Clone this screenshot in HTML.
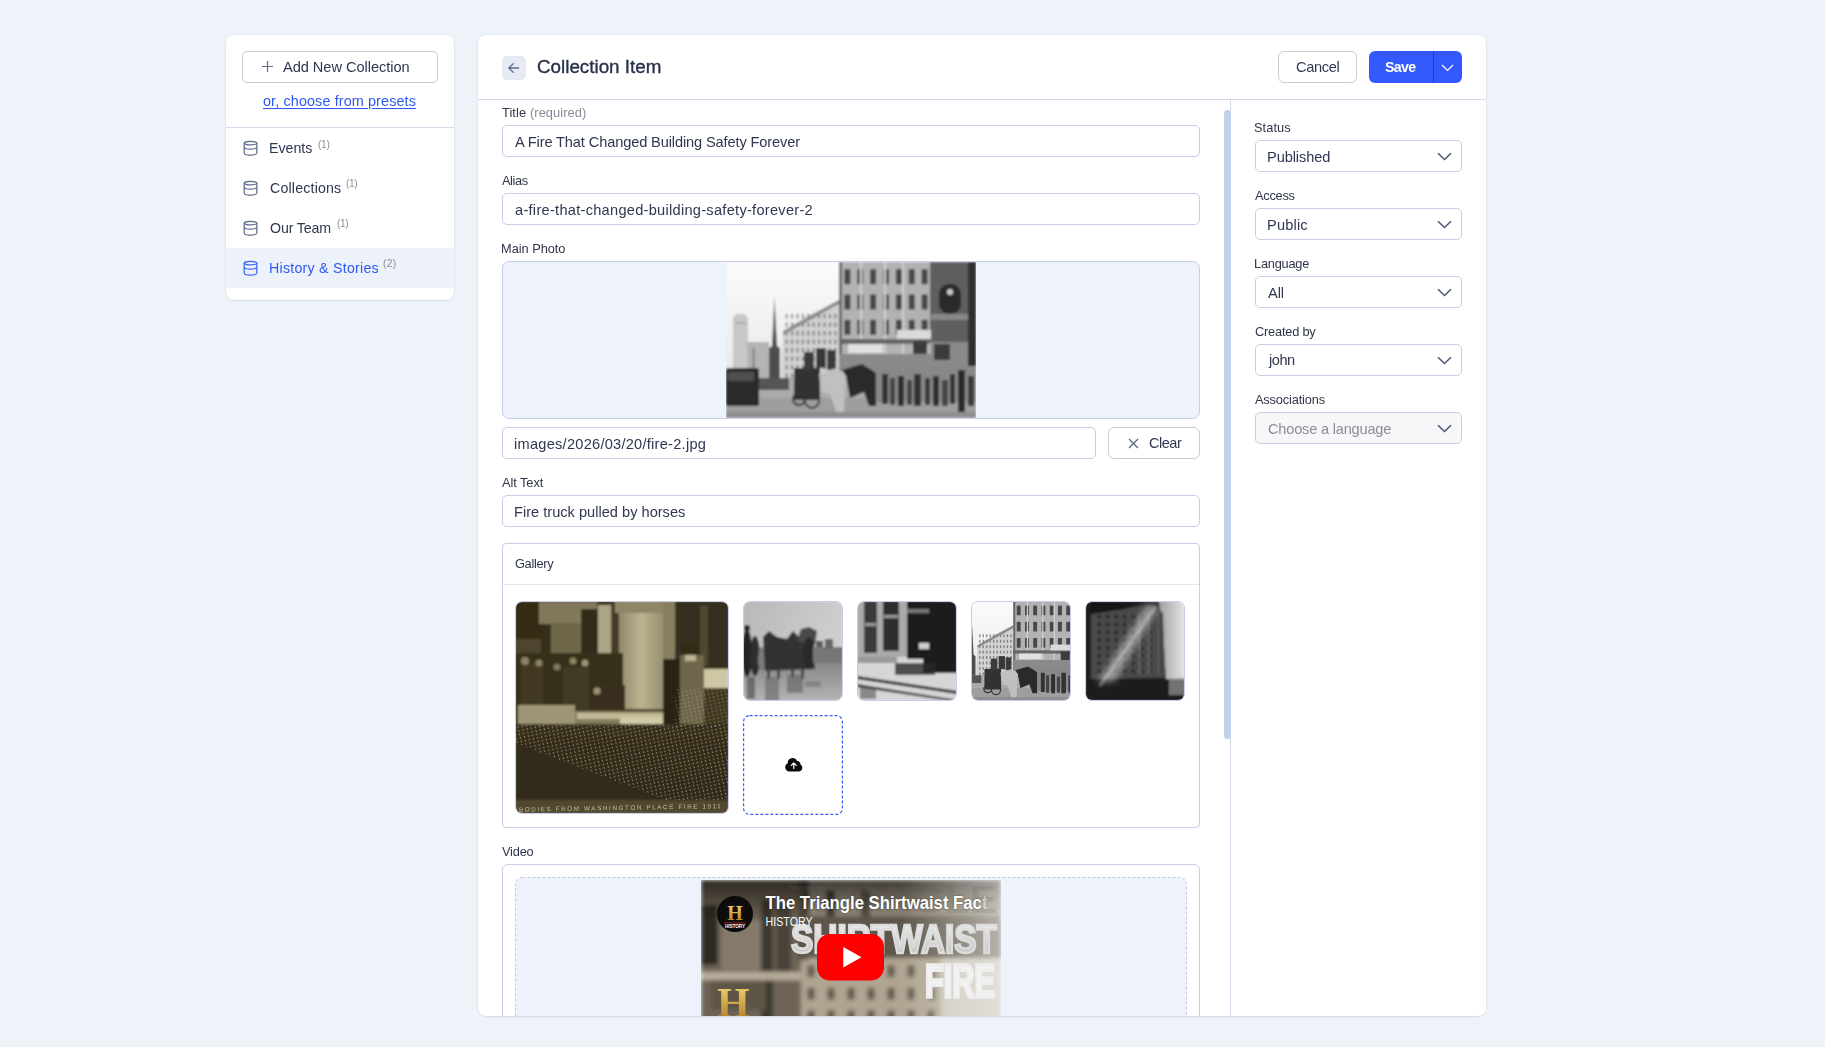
<!DOCTYPE html>
<html><head><meta charset="utf-8">
<style>
*{box-sizing:border-box;margin:0;padding:0}
html,body{width:1825px;height:1047px;overflow:hidden;background:#eef2f9;font-family:"Liberation Sans",sans-serif}
.abs{position:absolute}
.card{position:absolute;background:#fff;border-radius:8px;box-shadow:0 0 0 0.5px rgba(60,70,100,.09),0 1px 2px rgba(40,50,80,.08)}
.box{position:absolute;border:1px solid #c7cde6;border-radius:5px;background:#fff}
.thumb{position:absolute;border:1px solid #c7cde6;border-radius:7px;overflow:hidden}
.thumb svg{display:block;margin:-1px}
.abs>svg{display:block}
.tx{position:absolute;line-height:1;white-space:nowrap;will-change:transform}
</style></head><body>

<div class="card" style="left:226px;top:35px;width:228px;height:265px"></div>
<div class="abs" style="left:242px;top:51px;width:196px;height:32px;border:1px solid #c9cbd3;border-radius:5px"></div>
<svg class="abs" style="left:262px;top:61.2px" width="11" height="11" viewBox="0 0 11 11"><path d="M5.5 0v11M0 5.5h11" stroke="#5f6b8a" stroke-width="1.15" fill="none"/></svg>
<div class="abs" style="left:226px;top:127px;width:228px;height:1px;background:#d6dcec"></div>
<div class="abs" style="left:226px;top:248px;width:228px;height:40px;background:#edf1f9"></div>
<div class="abs" style="left:242.5px;top:140.2px"><svg width="15" height="16" viewBox="0 0 15 16"><g fill="none" stroke="#5d6a8e" stroke-width="1.2"><ellipse cx="7.5" cy="3.1" rx="6.3" ry="1.8"/><path d="M1.2 3.1v9.9c0 1.2 2.8 2.1 6.3 2.1s6.3-.9 6.3-2.1V3.1"/><path d="M1.2 7c0 1.2 2.8 2.1 6.3 2.1s6.3-.9 6.3-2.1"/></g></svg></div>
<div class="abs" style="left:242.5px;top:180.2px"><svg width="15" height="16" viewBox="0 0 15 16"><g fill="none" stroke="#5d6a8e" stroke-width="1.2"><ellipse cx="7.5" cy="3.1" rx="6.3" ry="1.8"/><path d="M1.2 3.1v9.9c0 1.2 2.8 2.1 6.3 2.1s6.3-.9 6.3-2.1V3.1"/><path d="M1.2 7c0 1.2 2.8 2.1 6.3 2.1s6.3-.9 6.3-2.1"/></g></svg></div>
<div class="abs" style="left:242.5px;top:220.2px"><svg width="15" height="16" viewBox="0 0 15 16"><g fill="none" stroke="#5d6a8e" stroke-width="1.2"><ellipse cx="7.5" cy="3.1" rx="6.3" ry="1.8"/><path d="M1.2 3.1v9.9c0 1.2 2.8 2.1 6.3 2.1s6.3-.9 6.3-2.1V3.1"/><path d="M1.2 7c0 1.2 2.8 2.1 6.3 2.1s6.3-.9 6.3-2.1"/></g></svg></div>
<div class="abs" style="left:242.5px;top:260.2px"><svg width="15" height="16" viewBox="0 0 15 16"><g fill="none" stroke="#3a63ee" stroke-width="1.2"><ellipse cx="7.5" cy="3.1" rx="6.3" ry="1.8"/><path d="M1.2 3.1v9.9c0 1.2 2.8 2.1 6.3 2.1s6.3-.9 6.3-2.1V3.1"/><path d="M1.2 7c0 1.2 2.8 2.1 6.3 2.1s6.3-.9 6.3-2.1"/></g></svg></div>

<div class="card" style="left:478px;top:35px;width:1008px;height:981px"></div>
<div class="abs" style="left:502px;top:56px;width:24px;height:24px;border-radius:5px;background:#e6eaf4"></div>
<svg class="abs" style="left:502px;top:56px" width="24" height="24" viewBox="0 0 24 24"><path d="M16.6 12H6.8M11.3 7.6L6.8 12l4.5 4.4" stroke="#5d6b90" stroke-width="1.3" fill="none" stroke-linecap="round" stroke-linejoin="round"/></svg>
<div class="abs" style="left:1278px;top:51px;width:79px;height:32px;border:1px solid #c9cbd3;border-radius:6px"></div>
<div class="abs" style="left:1369px;top:51px;width:93px;height:32px;border-radius:6px;background:#3358fc"></div>
<div class="abs" style="left:1433px;top:51px;width:1.3px;height:32px;background:#2240b5"></div>
<svg class="abs" style="left:1440.7px;top:64px" width="13" height="8" viewBox="0 0 13 8"><path d="M1 1l5.5 5.5L12 1" stroke="#fff" stroke-width="1.2" fill="none"/></svg>
<div class="abs" style="left:478px;top:99px;width:1008px;height:1px;background:#d3d9ea"></div>
<div class="abs" style="left:1230px;top:100px;width:1px;height:916px;background:#d5daec"></div>
<div class="abs" style="left:1224px;top:110px;width:7px;height:629px;border-radius:3.5px;background:#c2d0e8"></div>

<div class="box" style="left:502px;top:125px;width:698px;height:32px"></div>
<div class="box" style="left:502px;top:193px;width:698px;height:32px"></div>
<div class="box" style="left:502px;top:261px;width:698px;height:158px;background:#eef2fa;border-radius:7px;overflow:hidden">
  <div class="abs" style="left:223px;top:0px;width:250px;height:156px"><svg width="250" height="156" viewBox="0 0 250 156" style="display:block">
<defs><filter id="bl1" x="-5%" y="-5%" width="110%" height="110%"><feGaussianBlur stdDeviation="0.8"/></filter>
<linearGradient id="sky1" x1="0" y1="0" x2="0" y2="1"><stop offset="0" stop-color="#fbfbfb"/><stop offset="1" stop-color="#e2e2e2"/></linearGradient></defs>
<g filter="url(#bl1)"><rect width="250" height="156" fill="url(#sky1)"/>
<path d="M7 110 L7 56 L10 52 L19 52 L22 56 L22 110 Z" fill="#c8c8c8"/>
<rect x="9" y="60" width="11" height="2" fill="#aaa"/>
<rect x="21" y="80" width="22" height="38" fill="#b4b4b4"/>
<rect x="26" y="86" width="3" height="30" fill="#777" opacity=".6"/>
<path d="M55 120 L57 69 L85 52 L113 38 L113 122 Z" fill="#d2d2d2"/>
<rect x="59.7" y="52.0" width="2" height="4.5" fill="#5a5a5a" opacity="0.7"/><rect x="59.7" y="60.5" width="2" height="4.5" fill="#5a5a5a" opacity="0.7"/><rect x="59.7" y="69.0" width="2" height="4.5" fill="#5a5a5a" opacity="0.7"/><rect x="59.7" y="77.5" width="2" height="4.5" fill="#5a5a5a" opacity="0.7"/><rect x="59.7" y="86.0" width="2" height="4.5" fill="#5a5a5a" opacity="0.7"/><rect x="59.7" y="94.5" width="2" height="4.5" fill="#5a5a5a" opacity="0.7"/><rect x="59.7" y="103.0" width="2" height="4.5" fill="#5a5a5a" opacity="0.7"/><rect x="59.7" y="111.5" width="2" height="4.5" fill="#5a5a5a" opacity="0.7"/><rect x="65.1" y="52.0" width="2" height="4.5" fill="#5a5a5a" opacity="0.7"/><rect x="65.1" y="60.5" width="2" height="4.5" fill="#5a5a5a" opacity="0.7"/><rect x="65.1" y="69.0" width="2" height="4.5" fill="#5a5a5a" opacity="0.7"/><rect x="65.1" y="77.5" width="2" height="4.5" fill="#5a5a5a" opacity="0.7"/><rect x="65.1" y="86.0" width="2" height="4.5" fill="#5a5a5a" opacity="0.7"/><rect x="65.1" y="94.5" width="2" height="4.5" fill="#5a5a5a" opacity="0.7"/><rect x="65.1" y="103.0" width="2" height="4.5" fill="#5a5a5a" opacity="0.7"/><rect x="65.1" y="111.5" width="2" height="4.5" fill="#5a5a5a" opacity="0.7"/><rect x="70.5" y="52.0" width="2" height="4.5" fill="#5a5a5a" opacity="0.7"/><rect x="70.5" y="60.5" width="2" height="4.5" fill="#5a5a5a" opacity="0.7"/><rect x="70.5" y="69.0" width="2" height="4.5" fill="#5a5a5a" opacity="0.7"/><rect x="70.5" y="77.5" width="2" height="4.5" fill="#5a5a5a" opacity="0.7"/><rect x="70.5" y="86.0" width="2" height="4.5" fill="#5a5a5a" opacity="0.7"/><rect x="70.5" y="94.5" width="2" height="4.5" fill="#5a5a5a" opacity="0.7"/><rect x="70.5" y="103.0" width="2" height="4.5" fill="#5a5a5a" opacity="0.7"/><rect x="70.5" y="111.5" width="2" height="4.5" fill="#5a5a5a" opacity="0.7"/><rect x="75.9" y="52.0" width="2" height="4.5" fill="#5a5a5a" opacity="0.7"/><rect x="75.9" y="60.5" width="2" height="4.5" fill="#5a5a5a" opacity="0.7"/><rect x="75.9" y="69.0" width="2" height="4.5" fill="#5a5a5a" opacity="0.7"/><rect x="75.9" y="77.5" width="2" height="4.5" fill="#5a5a5a" opacity="0.7"/><rect x="75.9" y="86.0" width="2" height="4.5" fill="#5a5a5a" opacity="0.7"/><rect x="75.9" y="94.5" width="2" height="4.5" fill="#5a5a5a" opacity="0.7"/><rect x="75.9" y="103.0" width="2" height="4.5" fill="#5a5a5a" opacity="0.7"/><rect x="75.9" y="111.5" width="2" height="4.5" fill="#5a5a5a" opacity="0.7"/><rect x="81.3" y="52.0" width="2" height="4.5" fill="#5a5a5a" opacity="0.7"/><rect x="81.3" y="60.5" width="2" height="4.5" fill="#5a5a5a" opacity="0.7"/><rect x="81.3" y="69.0" width="2" height="4.5" fill="#5a5a5a" opacity="0.7"/><rect x="81.3" y="77.5" width="2" height="4.5" fill="#5a5a5a" opacity="0.7"/><rect x="81.3" y="86.0" width="2" height="4.5" fill="#5a5a5a" opacity="0.7"/><rect x="81.3" y="94.5" width="2" height="4.5" fill="#5a5a5a" opacity="0.7"/><rect x="81.3" y="103.0" width="2" height="4.5" fill="#5a5a5a" opacity="0.7"/><rect x="81.3" y="111.5" width="2" height="4.5" fill="#5a5a5a" opacity="0.7"/><rect x="86.7" y="52.0" width="2" height="4.5" fill="#5a5a5a" opacity="0.7"/><rect x="86.7" y="60.5" width="2" height="4.5" fill="#5a5a5a" opacity="0.7"/><rect x="86.7" y="69.0" width="2" height="4.5" fill="#5a5a5a" opacity="0.7"/><rect x="86.7" y="77.5" width="2" height="4.5" fill="#5a5a5a" opacity="0.7"/><rect x="86.7" y="86.0" width="2" height="4.5" fill="#5a5a5a" opacity="0.7"/><rect x="86.7" y="94.5" width="2" height="4.5" fill="#5a5a5a" opacity="0.7"/><rect x="86.7" y="103.0" width="2" height="4.5" fill="#5a5a5a" opacity="0.7"/><rect x="86.7" y="111.5" width="2" height="4.5" fill="#5a5a5a" opacity="0.7"/><rect x="92.1" y="52.0" width="2" height="4.5" fill="#5a5a5a" opacity="0.7"/><rect x="92.1" y="60.5" width="2" height="4.5" fill="#5a5a5a" opacity="0.7"/><rect x="92.1" y="69.0" width="2" height="4.5" fill="#5a5a5a" opacity="0.7"/><rect x="92.1" y="77.5" width="2" height="4.5" fill="#5a5a5a" opacity="0.7"/><rect x="92.1" y="86.0" width="2" height="4.5" fill="#5a5a5a" opacity="0.7"/><rect x="92.1" y="94.5" width="2" height="4.5" fill="#5a5a5a" opacity="0.7"/><rect x="92.1" y="103.0" width="2" height="4.5" fill="#5a5a5a" opacity="0.7"/><rect x="92.1" y="111.5" width="2" height="4.5" fill="#5a5a5a" opacity="0.7"/><rect x="97.5" y="52.0" width="2" height="4.5" fill="#5a5a5a" opacity="0.7"/><rect x="97.5" y="60.5" width="2" height="4.5" fill="#5a5a5a" opacity="0.7"/><rect x="97.5" y="69.0" width="2" height="4.5" fill="#5a5a5a" opacity="0.7"/><rect x="97.5" y="77.5" width="2" height="4.5" fill="#5a5a5a" opacity="0.7"/><rect x="97.5" y="86.0" width="2" height="4.5" fill="#5a5a5a" opacity="0.7"/><rect x="97.5" y="94.5" width="2" height="4.5" fill="#5a5a5a" opacity="0.7"/><rect x="97.5" y="103.0" width="2" height="4.5" fill="#5a5a5a" opacity="0.7"/><rect x="97.5" y="111.5" width="2" height="4.5" fill="#5a5a5a" opacity="0.7"/><rect x="102.9" y="52.0" width="2" height="4.5" fill="#5a5a5a" opacity="0.7"/><rect x="102.9" y="60.5" width="2" height="4.5" fill="#5a5a5a" opacity="0.7"/><rect x="102.9" y="69.0" width="2" height="4.5" fill="#5a5a5a" opacity="0.7"/><rect x="102.9" y="77.5" width="2" height="4.5" fill="#5a5a5a" opacity="0.7"/><rect x="102.9" y="86.0" width="2" height="4.5" fill="#5a5a5a" opacity="0.7"/><rect x="102.9" y="94.5" width="2" height="4.5" fill="#5a5a5a" opacity="0.7"/><rect x="102.9" y="103.0" width="2" height="4.5" fill="#5a5a5a" opacity="0.7"/><rect x="102.9" y="111.5" width="2" height="4.5" fill="#5a5a5a" opacity="0.7"/><rect x="108.3" y="52.0" width="2" height="4.5" fill="#5a5a5a" opacity="0.7"/><rect x="108.3" y="60.5" width="2" height="4.5" fill="#5a5a5a" opacity="0.7"/><rect x="108.3" y="69.0" width="2" height="4.5" fill="#5a5a5a" opacity="0.7"/><rect x="108.3" y="77.5" width="2" height="4.5" fill="#5a5a5a" opacity="0.7"/><rect x="108.3" y="86.0" width="2" height="4.5" fill="#5a5a5a" opacity="0.7"/><rect x="108.3" y="94.5" width="2" height="4.5" fill="#5a5a5a" opacity="0.7"/><rect x="108.3" y="103.0" width="2" height="4.5" fill="#5a5a5a" opacity="0.7"/><rect x="108.3" y="111.5" width="2" height="4.5" fill="#5a5a5a" opacity="0.7"/>
<path d="M57 69 L113 38 L113 42 L57 73 Z" fill="#8a8a8a"/>
<path d="M43 121 L43 86 L46 84 L48.5 35 L51 84 L54 86 L54 121 Z" fill="#4e4e4e"/>
<rect x="113" y="0" width="137" height="108" fill="#b2b2b2"/>
<rect x="118.4" y="7.2" width="6" height="15" fill="#333" opacity="0.85"/><rect x="118.4" y="32.5" width="6" height="15" fill="#333" opacity="0.85"/><rect x="118.4" y="57.8" width="6" height="15" fill="#333" opacity="0.85"/><rect x="131.3" y="7.2" width="6" height="15" fill="#333" opacity="0.85"/><rect x="131.3" y="32.5" width="6" height="15" fill="#333" opacity="0.85"/><rect x="131.3" y="57.8" width="6" height="15" fill="#333" opacity="0.85"/><rect x="144.1" y="7.2" width="6" height="15" fill="#333" opacity="0.85"/><rect x="144.1" y="32.5" width="6" height="15" fill="#333" opacity="0.85"/><rect x="144.1" y="57.8" width="6" height="15" fill="#333" opacity="0.85"/><rect x="157.0" y="7.2" width="6" height="15" fill="#333" opacity="0.85"/><rect x="157.0" y="32.5" width="6" height="15" fill="#333" opacity="0.85"/><rect x="157.0" y="57.8" width="6" height="15" fill="#333" opacity="0.85"/><rect x="169.9" y="7.2" width="6" height="15" fill="#333" opacity="0.85"/><rect x="169.9" y="32.5" width="6" height="15" fill="#333" opacity="0.85"/><rect x="169.9" y="57.8" width="6" height="15" fill="#333" opacity="0.85"/><rect x="182.7" y="7.2" width="6" height="15" fill="#333" opacity="0.85"/><rect x="182.7" y="32.5" width="6" height="15" fill="#333" opacity="0.85"/><rect x="182.7" y="57.8" width="6" height="15" fill="#333" opacity="0.85"/><rect x="195.6" y="7.2" width="6" height="15" fill="#333" opacity="0.85"/><rect x="195.6" y="32.5" width="6" height="15" fill="#333" opacity="0.85"/><rect x="195.6" y="57.8" width="6" height="15" fill="#333" opacity="0.85"/>
<rect x="113" y="0" width="3" height="108" fill="#666"/>
<rect x="134" y="0" width="2" height="100" fill="#d0d0d0"/>
<rect x="158" y="0" width="2" height="100" fill="#d0d0d0"/>
<rect x="176" y="0" width="2" height="100" fill="#d0d0d0"/>
<rect x="204" y="0" width="46" height="80" fill="#5e5e5e"/>
<rect x="213" y="22" width="22" height="30" rx="10" fill="#2a2a2a"/>
<circle cx="224" cy="30" r="3" fill="#ccc"/>
<rect x="205" y="52" width="40" height="6" fill="#888"/>
<rect x="242" y="0" width="8" height="118" fill="#2e2e2e"/>
<rect x="113" y="77" width="91" height="5" fill="#666"/>
<rect x="122" y="82" width="35" height="9" fill="#e0e0e0"/>
<rect x="171" y="68" width="34" height="9" fill="#dadada"/>
<rect x="187" y="79" width="14" height="17" fill="#3a3a3a"/>
<rect x="205" y="80" width="37" height="30" fill="#8a8a8a"/>
<rect x="208" y="82" width="16" height="16" fill="#3a3a3a"/>
<rect x="113" y="92" width="92" height="18" fill="#8a8a8a"/>
<rect x="0" y="116" width="250" height="40" fill="#ababab"/>
<rect x="0" y="136" width="250" height="20" fill="#9e9e9e"/>
<rect x="0" y="150" width="250" height="6" fill="#8e8e8e"/>
<rect x="0" y="106" width="33" height="38" fill="#2a2a2a" rx="2"/>
<rect x="2" y="110" width="26" height="9" fill="#505050"/>
<rect x="33" y="116" width="30" height="12" fill="#555"/>
<rect x="68" y="106" width="26" height="32" fill="#333"/>
<circle cx="73" cy="137" r="6" fill="none" stroke="#333" stroke-width="1.8"/>
<circle cx="86" cy="139" r="7" fill="none" stroke="#333" stroke-width="1.8"/>
<rect x="78" y="90" width="10" height="18" fill="#3a3a3a"/>
<rect x="90" y="86" width="10" height="20" fill="#383838"/>
<rect x="101" y="88" width="9" height="20" fill="#3a3a3a"/>
<path d="M93 112 L110 106 L120 112 L118 150 L110 150 L104 132 L95 130 Z" fill="#c0c0c0"/>
<path d="M116 108 L136 102 L152 112 L150 144 L143 144 L138 130 L124 136 L120 114 Z" fill="#2c2c2c"/>
<rect x="150" y="104" width="100" height="36" fill="#888"/>
<rect x="156" y="112" width="6" height="30" fill="#333"/><rect x="164" y="116" width="5" height="27" fill="#444"/>
<rect x="172" y="114" width="6" height="30" fill="#2e2e2e"/><rect x="181" y="118" width="5" height="25" fill="#444"/>
<rect x="188" y="112" width="7" height="32" fill="#333"/><rect x="199" y="116" width="5" height="27" fill="#3a3a3a"/>
<rect x="207" y="114" width="6" height="30" fill="#2e2e2e"/><rect x="216" y="118" width="6" height="26" fill="#444"/>
<rect x="224" y="112" width="5" height="30" fill="#333"/><rect x="232" y="108" width="7" height="42" fill="#2a2a2a"/>
<rect x="242" y="114" width="6" height="30" fill="#3a3a3a"/></g></svg></div>
</div>
<div class="box" style="left:502px;top:427px;width:594px;height:32px"></div>
<div class="abs" style="left:1108px;top:427px;width:92px;height:32px;border:1px solid #c9cbd3;border-radius:6px"></div>
<svg class="abs" style="left:1127.5px;top:437.5px" width="11" height="11" viewBox="0 0 11 11"><path d="M1 1l9 9M10 1l-9 9" stroke="#56617e" stroke-width="1.2" fill="none"/></svg>
<div class="box" style="left:502px;top:495px;width:698px;height:32px"></div>

<div class="box" style="left:502px;top:543px;width:698px;height:285px;border-radius:4px"></div>
<div class="abs" style="left:503px;top:584px;width:696px;height:1px;background:#e4e7ef"></div>
<div class="thumb" style="left:515px;top:601px;width:214px;height:213px"><svg width="214" height="213" viewBox="0 0 214 213" style="display:block">
<defs><filter id="bl2" x="-5%" y="-5%" width="110%" height="110%"><feGaussianBlur stdDeviation="1.2"/></filter>
<filter id="bl2b"><feGaussianBlur stdDeviation="0.35"/></filter>
<filter id="warm"><feColorMatrix type="matrix" values="1.0 0 0 0 0.01  0 1.0 0 0 0.005  0 0 0.84 0 0  0 0 0 1 0"/></filter>
<pattern id="dots" width="4.2" height="3.6" patternUnits="userSpaceOnUse" patternTransform="rotate(-12)"><circle cx="2" cy="1.8" r="0.75" fill="#e2dabc"/></pattern>
<linearGradient id="pil" x1="0" y1="0" x2="1" y2="0"><stop offset="0" stop-color="#8f8874"/><stop offset=".5" stop-color="#b9b29d"/><stop offset="1" stop-color="#948d78"/></linearGradient>
<linearGradient id="flr" x1="0" y1="0" x2="0" y2="1"><stop offset="0" stop-color="#2f2a20"/><stop offset="1" stop-color="#26221a"/></linearGradient></defs>
<g filter="url(#warm)"><g filter="url(#bl2)">
<rect width="214" height="213" fill="#2f2a1f"/>
<rect x="0" y="0" width="28" height="110" fill="#2a2519"/>
<rect x="0" y="38" width="26" height="16" fill="#4a4332"/>
<rect x="24" y="1" width="58" height="22" fill="#7f7864"/>
<rect x="36" y="22" width="31" height="48" fill="#6c6551"/>
<rect x="66" y="8" width="18" height="80" fill="#2c271c"/>
<rect x="83" y="4" width="13" height="80" fill="#aaa391"/>
<rect x="96" y="0" width="8" height="90" fill="#3d372a"/>
<rect x="104" y="0" width="45" height="108" fill="url(#pil)"/>
<rect x="100" y="0" width="52" height="12" fill="#8c866f"/>
<rect x="148" y="0" width="12" height="100" fill="#857e69"/>
<rect x="160" y="0" width="54" height="68" fill="#2e2a20"/>
<rect x="185" y="5" width="8" height="60" fill="#4a4435"/>
<rect x="159" y="68" width="55" height="19" fill="#cdc6b2"/>
<rect x="160" y="87" width="54" height="40" fill="#3a3528"/>
<rect x="0" y="52" width="108" height="62" fill="#2d291e"/>
<rect x="6" y="62" width="22" height="50" fill="#3a3528"/>
<rect x="48" y="66" width="26" height="46" fill="#3a3529"/>
<rect x="78" y="84" width="32" height="30" fill="#302b20"/>
<circle cx="10" cy="60" r="4" fill="#8a836d"/><circle cx="24" cy="62" r="3.5" fill="#8a836d"/>
<circle cx="42" cy="66" r="3.5" fill="#7d7662"/><circle cx="58" cy="60" r="3.5" fill="#8a836d"/><circle cx="70" cy="62" r="3.5" fill="#9a937d"/>
<circle cx="82" cy="90" r="3.5" fill="#9a937d"/>
<rect x="3" y="104" width="57" height="19" fill="#9b947f"/>
<rect x="60" y="110" width="97" height="30" fill="#827b66"/>
<rect x="62" y="112" width="95" height="6" fill="#bfb8a3"/>
<rect x="105" y="116" width="52" height="10" fill="#d0c9b4"/>
<rect x="148" y="58" width="17" height="75" fill="#1f1b14"/>
<rect x="165" y="54" width="24" height="82" fill="#6c6552"/>
<rect x="167" y="43" width="16" height="11" fill="#2a2519"/>
<rect x="170" y="54" width="11" height="6" fill="#b8b19c"/>
<rect x="171" y="135" width="16" height="13" fill="#7e7762"/>
<rect x="0" y="123" width="214" height="76" fill="url(#flr)"/>
<path d="M0 140 L0 199 L144 199 Z" fill="#2b271d"/>
<rect x="0" y="199" width="214" height="14" fill="#4b4535"/>
</g>
<g filter="url(#bl2b)" opacity=".7">
<path d="M0 124 L214 124 L214 199 L150 199 L0 142 Z" fill="url(#dots)"/>
<rect x="160" y="88" width="54" height="38" fill="url(#dots)" opacity=".6"/>
</g>
<text x="4" y="209" font-family="Liberation Sans" font-size="6.3" fill="#d9d2bb" letter-spacing="1.6" opacity=".85" transform="rotate(-1 100 209)">BODIES  FROM  WASHINGTON  PLACE  FIRE  1911</text>
</g></svg></div>
<div class="thumb" style="left:743px;top:601px;width:100px;height:100px"><svg width="100" height="100" viewBox="0 0 100 100" style="display:block">
<defs><filter id="bl3" x="-5%" y="-5%" width="110%" height="110%"><feGaussianBlur stdDeviation="1"/></filter>
<linearGradient id="s3" x1="0" y1="0" x2="1" y2="0.4"><stop offset="0" stop-color="#b8b8b8"/><stop offset="1" stop-color="#d0d0d0"/></linearGradient>
<linearGradient id="st3" x1="0" y1="0" x2="0" y2="1"><stop offset="0" stop-color="#888"/><stop offset="1" stop-color="#b4b4b4"/></linearGradient></defs>
<g filter="url(#bl3)">
<rect width="100" height="100" fill="url(#s3)"/>
<rect x="0" y="62" width="100" height="38" fill="url(#st3)"/>
<ellipse cx="4" cy="52" rx="5" ry="24" fill="#242424"/>
<circle cx="4" cy="27" r="3" fill="#222"/>
<ellipse cx="12" cy="55" rx="5" ry="20" fill="#2e2e2e"/>
<ellipse cx="19" cy="58" rx="4" ry="12" fill="#7a7a7a"/>
<path d="M20 36 L26 30 L34 36 L44 38 L50 30 L56 36 L62 33 L70 40 L72 68 L22 70 Z" fill="#333"/>
<path d="M54 40 L58 28 L66 26 L74 30 L72 44 Z" fill="#4a4a4a"/>
<ellipse cx="66" cy="52" rx="6" ry="16" fill="#2a2a2a"/>
<rect x="73" y="40" width="7" height="8" fill="#5a5a5a"/>
<rect x="70" y="46" width="30" height="16" fill="#777"/>
<rect x="82" y="38" width="8" height="10" fill="#666"/>
<rect x="24" y="68" width="3" height="10" fill="#444"/><rect x="34" y="68" width="3" height="10" fill="#444"/>
<rect x="48" y="68" width="3" height="8" fill="#444"/><rect x="58" y="68" width="3" height="10" fill="#444"/>
<rect x="4" y="76" width="8" height="22" fill="#555" opacity=".7"/>
<rect x="22" y="76" width="14" height="24" fill="#666" opacity=".6"/>
<rect x="44" y="74" width="16" height="18" fill="#606060" opacity=".6"/>
<rect x="62" y="80" width="16" height="6" fill="#6a6a6a" opacity=".5"/>
</g></svg></div>
<div class="thumb" style="left:857px;top:601px;width:100px;height:100px"><svg width="100" height="100" viewBox="0 0 100 100" style="display:block">
<defs><filter id="bl4" x="-5%" y="-5%" width="110%" height="110%"><feGaussianBlur stdDeviation="0.9"/></filter></defs>
<g filter="url(#bl4)">
<rect width="100" height="100" fill="#d6d6d6"/>
<rect x="0" y="0" width="50" height="56" fill="#aaaaaa"/>
<rect x="7" y="0" width="13" height="52" fill="#3a3a3a"/>
<rect x="26" y="0" width="16" height="50" fill="#2f2f2f"/>
<rect x="8" y="22" width="11" height="3" fill="#999"/>
<rect x="27" y="14" width="14" height="3" fill="#999"/>
<rect x="50" y="0" width="50" height="58" fill="#1c1c1c"/>
<rect x="50" y="8" width="22" height="4" fill="#777"/>
<rect x="66" y="42" width="34" height="30" fill="#1a1a1a"/>
<rect x="62" y="42" width="10" height="6" fill="#cfcfcf"/>
<rect x="38" y="62" width="40" height="12" fill="#2a2a2a" opacity=".8"/>
<rect x="0" y="56" width="40" height="6" fill="#9a9a9a"/>
<path d="M0 75 L100 90 L100 93 L0 78 Z" fill="#262626"/>
<path d="M0 83 L100 99 L100 101 L0 86 Z" fill="#333"/>
<rect x="3" y="86" width="16" height="12" fill="#555" opacity=".6"/>
</g></svg></div>
<div class="thumb" style="left:971px;top:601px;width:100px;height:100px"><svg width="100" height="100" viewBox="47 0 156 156" style="display:block"><g filter="url(#bl1)"><rect width="250" height="156" fill="url(#sky1)"/>
<path d="M7 110 L7 56 L10 52 L19 52 L22 56 L22 110 Z" fill="#c8c8c8"/>
<rect x="9" y="60" width="11" height="2" fill="#aaa"/>
<rect x="21" y="80" width="22" height="38" fill="#b4b4b4"/>
<rect x="26" y="86" width="3" height="30" fill="#777" opacity=".6"/>
<path d="M55 120 L57 69 L85 52 L113 38 L113 122 Z" fill="#d2d2d2"/>
<rect x="59.7" y="52.0" width="2" height="4.5" fill="#5a5a5a" opacity="0.7"/><rect x="59.7" y="60.5" width="2" height="4.5" fill="#5a5a5a" opacity="0.7"/><rect x="59.7" y="69.0" width="2" height="4.5" fill="#5a5a5a" opacity="0.7"/><rect x="59.7" y="77.5" width="2" height="4.5" fill="#5a5a5a" opacity="0.7"/><rect x="59.7" y="86.0" width="2" height="4.5" fill="#5a5a5a" opacity="0.7"/><rect x="59.7" y="94.5" width="2" height="4.5" fill="#5a5a5a" opacity="0.7"/><rect x="59.7" y="103.0" width="2" height="4.5" fill="#5a5a5a" opacity="0.7"/><rect x="59.7" y="111.5" width="2" height="4.5" fill="#5a5a5a" opacity="0.7"/><rect x="65.1" y="52.0" width="2" height="4.5" fill="#5a5a5a" opacity="0.7"/><rect x="65.1" y="60.5" width="2" height="4.5" fill="#5a5a5a" opacity="0.7"/><rect x="65.1" y="69.0" width="2" height="4.5" fill="#5a5a5a" opacity="0.7"/><rect x="65.1" y="77.5" width="2" height="4.5" fill="#5a5a5a" opacity="0.7"/><rect x="65.1" y="86.0" width="2" height="4.5" fill="#5a5a5a" opacity="0.7"/><rect x="65.1" y="94.5" width="2" height="4.5" fill="#5a5a5a" opacity="0.7"/><rect x="65.1" y="103.0" width="2" height="4.5" fill="#5a5a5a" opacity="0.7"/><rect x="65.1" y="111.5" width="2" height="4.5" fill="#5a5a5a" opacity="0.7"/><rect x="70.5" y="52.0" width="2" height="4.5" fill="#5a5a5a" opacity="0.7"/><rect x="70.5" y="60.5" width="2" height="4.5" fill="#5a5a5a" opacity="0.7"/><rect x="70.5" y="69.0" width="2" height="4.5" fill="#5a5a5a" opacity="0.7"/><rect x="70.5" y="77.5" width="2" height="4.5" fill="#5a5a5a" opacity="0.7"/><rect x="70.5" y="86.0" width="2" height="4.5" fill="#5a5a5a" opacity="0.7"/><rect x="70.5" y="94.5" width="2" height="4.5" fill="#5a5a5a" opacity="0.7"/><rect x="70.5" y="103.0" width="2" height="4.5" fill="#5a5a5a" opacity="0.7"/><rect x="70.5" y="111.5" width="2" height="4.5" fill="#5a5a5a" opacity="0.7"/><rect x="75.9" y="52.0" width="2" height="4.5" fill="#5a5a5a" opacity="0.7"/><rect x="75.9" y="60.5" width="2" height="4.5" fill="#5a5a5a" opacity="0.7"/><rect x="75.9" y="69.0" width="2" height="4.5" fill="#5a5a5a" opacity="0.7"/><rect x="75.9" y="77.5" width="2" height="4.5" fill="#5a5a5a" opacity="0.7"/><rect x="75.9" y="86.0" width="2" height="4.5" fill="#5a5a5a" opacity="0.7"/><rect x="75.9" y="94.5" width="2" height="4.5" fill="#5a5a5a" opacity="0.7"/><rect x="75.9" y="103.0" width="2" height="4.5" fill="#5a5a5a" opacity="0.7"/><rect x="75.9" y="111.5" width="2" height="4.5" fill="#5a5a5a" opacity="0.7"/><rect x="81.3" y="52.0" width="2" height="4.5" fill="#5a5a5a" opacity="0.7"/><rect x="81.3" y="60.5" width="2" height="4.5" fill="#5a5a5a" opacity="0.7"/><rect x="81.3" y="69.0" width="2" height="4.5" fill="#5a5a5a" opacity="0.7"/><rect x="81.3" y="77.5" width="2" height="4.5" fill="#5a5a5a" opacity="0.7"/><rect x="81.3" y="86.0" width="2" height="4.5" fill="#5a5a5a" opacity="0.7"/><rect x="81.3" y="94.5" width="2" height="4.5" fill="#5a5a5a" opacity="0.7"/><rect x="81.3" y="103.0" width="2" height="4.5" fill="#5a5a5a" opacity="0.7"/><rect x="81.3" y="111.5" width="2" height="4.5" fill="#5a5a5a" opacity="0.7"/><rect x="86.7" y="52.0" width="2" height="4.5" fill="#5a5a5a" opacity="0.7"/><rect x="86.7" y="60.5" width="2" height="4.5" fill="#5a5a5a" opacity="0.7"/><rect x="86.7" y="69.0" width="2" height="4.5" fill="#5a5a5a" opacity="0.7"/><rect x="86.7" y="77.5" width="2" height="4.5" fill="#5a5a5a" opacity="0.7"/><rect x="86.7" y="86.0" width="2" height="4.5" fill="#5a5a5a" opacity="0.7"/><rect x="86.7" y="94.5" width="2" height="4.5" fill="#5a5a5a" opacity="0.7"/><rect x="86.7" y="103.0" width="2" height="4.5" fill="#5a5a5a" opacity="0.7"/><rect x="86.7" y="111.5" width="2" height="4.5" fill="#5a5a5a" opacity="0.7"/><rect x="92.1" y="52.0" width="2" height="4.5" fill="#5a5a5a" opacity="0.7"/><rect x="92.1" y="60.5" width="2" height="4.5" fill="#5a5a5a" opacity="0.7"/><rect x="92.1" y="69.0" width="2" height="4.5" fill="#5a5a5a" opacity="0.7"/><rect x="92.1" y="77.5" width="2" height="4.5" fill="#5a5a5a" opacity="0.7"/><rect x="92.1" y="86.0" width="2" height="4.5" fill="#5a5a5a" opacity="0.7"/><rect x="92.1" y="94.5" width="2" height="4.5" fill="#5a5a5a" opacity="0.7"/><rect x="92.1" y="103.0" width="2" height="4.5" fill="#5a5a5a" opacity="0.7"/><rect x="92.1" y="111.5" width="2" height="4.5" fill="#5a5a5a" opacity="0.7"/><rect x="97.5" y="52.0" width="2" height="4.5" fill="#5a5a5a" opacity="0.7"/><rect x="97.5" y="60.5" width="2" height="4.5" fill="#5a5a5a" opacity="0.7"/><rect x="97.5" y="69.0" width="2" height="4.5" fill="#5a5a5a" opacity="0.7"/><rect x="97.5" y="77.5" width="2" height="4.5" fill="#5a5a5a" opacity="0.7"/><rect x="97.5" y="86.0" width="2" height="4.5" fill="#5a5a5a" opacity="0.7"/><rect x="97.5" y="94.5" width="2" height="4.5" fill="#5a5a5a" opacity="0.7"/><rect x="97.5" y="103.0" width="2" height="4.5" fill="#5a5a5a" opacity="0.7"/><rect x="97.5" y="111.5" width="2" height="4.5" fill="#5a5a5a" opacity="0.7"/><rect x="102.9" y="52.0" width="2" height="4.5" fill="#5a5a5a" opacity="0.7"/><rect x="102.9" y="60.5" width="2" height="4.5" fill="#5a5a5a" opacity="0.7"/><rect x="102.9" y="69.0" width="2" height="4.5" fill="#5a5a5a" opacity="0.7"/><rect x="102.9" y="77.5" width="2" height="4.5" fill="#5a5a5a" opacity="0.7"/><rect x="102.9" y="86.0" width="2" height="4.5" fill="#5a5a5a" opacity="0.7"/><rect x="102.9" y="94.5" width="2" height="4.5" fill="#5a5a5a" opacity="0.7"/><rect x="102.9" y="103.0" width="2" height="4.5" fill="#5a5a5a" opacity="0.7"/><rect x="102.9" y="111.5" width="2" height="4.5" fill="#5a5a5a" opacity="0.7"/><rect x="108.3" y="52.0" width="2" height="4.5" fill="#5a5a5a" opacity="0.7"/><rect x="108.3" y="60.5" width="2" height="4.5" fill="#5a5a5a" opacity="0.7"/><rect x="108.3" y="69.0" width="2" height="4.5" fill="#5a5a5a" opacity="0.7"/><rect x="108.3" y="77.5" width="2" height="4.5" fill="#5a5a5a" opacity="0.7"/><rect x="108.3" y="86.0" width="2" height="4.5" fill="#5a5a5a" opacity="0.7"/><rect x="108.3" y="94.5" width="2" height="4.5" fill="#5a5a5a" opacity="0.7"/><rect x="108.3" y="103.0" width="2" height="4.5" fill="#5a5a5a" opacity="0.7"/><rect x="108.3" y="111.5" width="2" height="4.5" fill="#5a5a5a" opacity="0.7"/>
<path d="M57 69 L113 38 L113 42 L57 73 Z" fill="#8a8a8a"/>
<path d="M43 121 L43 86 L46 84 L48.5 35 L51 84 L54 86 L54 121 Z" fill="#4e4e4e"/>
<rect x="113" y="0" width="137" height="108" fill="#b2b2b2"/>
<rect x="118.4" y="7.2" width="6" height="15" fill="#333" opacity="0.85"/><rect x="118.4" y="32.5" width="6" height="15" fill="#333" opacity="0.85"/><rect x="118.4" y="57.8" width="6" height="15" fill="#333" opacity="0.85"/><rect x="131.3" y="7.2" width="6" height="15" fill="#333" opacity="0.85"/><rect x="131.3" y="32.5" width="6" height="15" fill="#333" opacity="0.85"/><rect x="131.3" y="57.8" width="6" height="15" fill="#333" opacity="0.85"/><rect x="144.1" y="7.2" width="6" height="15" fill="#333" opacity="0.85"/><rect x="144.1" y="32.5" width="6" height="15" fill="#333" opacity="0.85"/><rect x="144.1" y="57.8" width="6" height="15" fill="#333" opacity="0.85"/><rect x="157.0" y="7.2" width="6" height="15" fill="#333" opacity="0.85"/><rect x="157.0" y="32.5" width="6" height="15" fill="#333" opacity="0.85"/><rect x="157.0" y="57.8" width="6" height="15" fill="#333" opacity="0.85"/><rect x="169.9" y="7.2" width="6" height="15" fill="#333" opacity="0.85"/><rect x="169.9" y="32.5" width="6" height="15" fill="#333" opacity="0.85"/><rect x="169.9" y="57.8" width="6" height="15" fill="#333" opacity="0.85"/><rect x="182.7" y="7.2" width="6" height="15" fill="#333" opacity="0.85"/><rect x="182.7" y="32.5" width="6" height="15" fill="#333" opacity="0.85"/><rect x="182.7" y="57.8" width="6" height="15" fill="#333" opacity="0.85"/><rect x="195.6" y="7.2" width="6" height="15" fill="#333" opacity="0.85"/><rect x="195.6" y="32.5" width="6" height="15" fill="#333" opacity="0.85"/><rect x="195.6" y="57.8" width="6" height="15" fill="#333" opacity="0.85"/>
<rect x="113" y="0" width="3" height="108" fill="#666"/>
<rect x="134" y="0" width="2" height="100" fill="#d0d0d0"/>
<rect x="158" y="0" width="2" height="100" fill="#d0d0d0"/>
<rect x="176" y="0" width="2" height="100" fill="#d0d0d0"/>
<rect x="204" y="0" width="46" height="80" fill="#5e5e5e"/>
<rect x="213" y="22" width="22" height="30" rx="10" fill="#2a2a2a"/>
<circle cx="224" cy="30" r="3" fill="#ccc"/>
<rect x="205" y="52" width="40" height="6" fill="#888"/>
<rect x="242" y="0" width="8" height="118" fill="#2e2e2e"/>
<rect x="113" y="77" width="91" height="5" fill="#666"/>
<rect x="122" y="82" width="35" height="9" fill="#e0e0e0"/>
<rect x="171" y="68" width="34" height="9" fill="#dadada"/>
<rect x="187" y="79" width="14" height="17" fill="#3a3a3a"/>
<rect x="205" y="80" width="37" height="30" fill="#8a8a8a"/>
<rect x="208" y="82" width="16" height="16" fill="#3a3a3a"/>
<rect x="113" y="92" width="92" height="18" fill="#8a8a8a"/>
<rect x="0" y="116" width="250" height="40" fill="#ababab"/>
<rect x="0" y="136" width="250" height="20" fill="#9e9e9e"/>
<rect x="0" y="150" width="250" height="6" fill="#8e8e8e"/>
<rect x="0" y="106" width="33" height="38" fill="#2a2a2a" rx="2"/>
<rect x="2" y="110" width="26" height="9" fill="#505050"/>
<rect x="33" y="116" width="30" height="12" fill="#555"/>
<rect x="68" y="106" width="26" height="32" fill="#333"/>
<circle cx="73" cy="137" r="6" fill="none" stroke="#333" stroke-width="1.8"/>
<circle cx="86" cy="139" r="7" fill="none" stroke="#333" stroke-width="1.8"/>
<rect x="78" y="90" width="10" height="18" fill="#3a3a3a"/>
<rect x="90" y="86" width="10" height="20" fill="#383838"/>
<rect x="101" y="88" width="9" height="20" fill="#3a3a3a"/>
<path d="M93 112 L110 106 L120 112 L118 150 L110 150 L104 132 L95 130 Z" fill="#c0c0c0"/>
<path d="M116 108 L136 102 L152 112 L150 144 L143 144 L138 130 L124 136 L120 114 Z" fill="#2c2c2c"/>
<rect x="150" y="104" width="100" height="36" fill="#888"/>
<rect x="156" y="112" width="6" height="30" fill="#333"/><rect x="164" y="116" width="5" height="27" fill="#444"/>
<rect x="172" y="114" width="6" height="30" fill="#2e2e2e"/><rect x="181" y="118" width="5" height="25" fill="#444"/>
<rect x="188" y="112" width="7" height="32" fill="#333"/><rect x="199" y="116" width="5" height="27" fill="#3a3a3a"/>
<rect x="207" y="114" width="6" height="30" fill="#2e2e2e"/><rect x="216" y="118" width="6" height="26" fill="#444"/>
<rect x="224" y="112" width="5" height="30" fill="#333"/><rect x="232" y="108" width="7" height="42" fill="#2a2a2a"/>
<rect x="242" y="114" width="6" height="30" fill="#3a3a3a"/></g></svg></div>
<div class="thumb" style="left:1085px;top:601px;width:100px;height:100px"><svg width="100" height="100" viewBox="0 0 100 100" style="display:block">
<defs><filter id="bl6" x="-10%" y="-10%" width="120%" height="120%"><feGaussianBlur stdDeviation="1.1"/></filter>
<filter id="bl6b" x="-30%" y="-30%" width="160%" height="160%"><feGaussianBlur stdDeviation="3"/></filter>
<linearGradient id="sm" x1="0" y1="0" x2="1" y2="0"><stop offset="0" stop-color="#a0a0a0"/><stop offset="1" stop-color="#e6e6e6"/></linearGradient></defs>
<g filter="url(#bl6)">
<rect width="100" height="100" fill="#2e2e2e"/>
<path d="M74 0 L100 0 L100 96 L82 94 L78 30 Z" fill="url(#sm)"/>
<path d="M3 12 L68 4 L78 12 L80 76 L3 78 Z" fill="#4a4a4a"/>
<rect x="12.8" y="13.9" width="3" height="4" fill="#1e1e1e" opacity="0.8"/><rect x="12.8" y="21.6" width="3" height="4" fill="#1e1e1e" opacity="0.8"/><rect x="12.8" y="29.4" width="3" height="4" fill="#1e1e1e" opacity="0.8"/><rect x="12.8" y="37.1" width="3" height="4" fill="#1e1e1e" opacity="0.8"/><rect x="12.8" y="44.9" width="3" height="4" fill="#1e1e1e" opacity="0.8"/><rect x="12.8" y="52.6" width="3" height="4" fill="#1e1e1e" opacity="0.8"/><rect x="12.8" y="60.4" width="3" height="4" fill="#1e1e1e" opacity="0.8"/><rect x="12.8" y="68.1" width="3" height="4" fill="#1e1e1e" opacity="0.8"/><rect x="21.2" y="13.9" width="3" height="4" fill="#1e1e1e" opacity="0.8"/><rect x="21.2" y="21.6" width="3" height="4" fill="#1e1e1e" opacity="0.8"/><rect x="21.2" y="29.4" width="3" height="4" fill="#1e1e1e" opacity="0.8"/><rect x="21.2" y="37.1" width="3" height="4" fill="#1e1e1e" opacity="0.8"/><rect x="21.2" y="44.9" width="3" height="4" fill="#1e1e1e" opacity="0.8"/><rect x="21.2" y="52.6" width="3" height="4" fill="#1e1e1e" opacity="0.8"/><rect x="21.2" y="60.4" width="3" height="4" fill="#1e1e1e" opacity="0.8"/><rect x="21.2" y="68.1" width="3" height="4" fill="#1e1e1e" opacity="0.8"/><rect x="29.8" y="13.9" width="3" height="4" fill="#1e1e1e" opacity="0.8"/><rect x="29.8" y="21.6" width="3" height="4" fill="#1e1e1e" opacity="0.8"/><rect x="29.8" y="29.4" width="3" height="4" fill="#1e1e1e" opacity="0.8"/><rect x="29.8" y="37.1" width="3" height="4" fill="#1e1e1e" opacity="0.8"/><rect x="29.8" y="44.9" width="3" height="4" fill="#1e1e1e" opacity="0.8"/><rect x="29.8" y="52.6" width="3" height="4" fill="#1e1e1e" opacity="0.8"/><rect x="29.8" y="60.4" width="3" height="4" fill="#1e1e1e" opacity="0.8"/><rect x="29.8" y="68.1" width="3" height="4" fill="#1e1e1e" opacity="0.8"/><rect x="38.2" y="13.9" width="3" height="4" fill="#1e1e1e" opacity="0.8"/><rect x="38.2" y="21.6" width="3" height="4" fill="#1e1e1e" opacity="0.8"/><rect x="38.2" y="29.4" width="3" height="4" fill="#1e1e1e" opacity="0.8"/><rect x="38.2" y="37.1" width="3" height="4" fill="#1e1e1e" opacity="0.8"/><rect x="38.2" y="44.9" width="3" height="4" fill="#1e1e1e" opacity="0.8"/><rect x="38.2" y="52.6" width="3" height="4" fill="#1e1e1e" opacity="0.8"/><rect x="38.2" y="60.4" width="3" height="4" fill="#1e1e1e" opacity="0.8"/><rect x="38.2" y="68.1" width="3" height="4" fill="#1e1e1e" opacity="0.8"/><rect x="46.8" y="13.9" width="3" height="4" fill="#1e1e1e" opacity="0.8"/><rect x="46.8" y="21.6" width="3" height="4" fill="#1e1e1e" opacity="0.8"/><rect x="46.8" y="29.4" width="3" height="4" fill="#1e1e1e" opacity="0.8"/><rect x="46.8" y="37.1" width="3" height="4" fill="#1e1e1e" opacity="0.8"/><rect x="46.8" y="44.9" width="3" height="4" fill="#1e1e1e" opacity="0.8"/><rect x="46.8" y="52.6" width="3" height="4" fill="#1e1e1e" opacity="0.8"/><rect x="46.8" y="60.4" width="3" height="4" fill="#1e1e1e" opacity="0.8"/><rect x="46.8" y="68.1" width="3" height="4" fill="#1e1e1e" opacity="0.8"/><rect x="55.2" y="13.9" width="3" height="4" fill="#1e1e1e" opacity="0.8"/><rect x="55.2" y="21.6" width="3" height="4" fill="#1e1e1e" opacity="0.8"/><rect x="55.2" y="29.4" width="3" height="4" fill="#1e1e1e" opacity="0.8"/><rect x="55.2" y="37.1" width="3" height="4" fill="#1e1e1e" opacity="0.8"/><rect x="55.2" y="44.9" width="3" height="4" fill="#1e1e1e" opacity="0.8"/><rect x="55.2" y="52.6" width="3" height="4" fill="#1e1e1e" opacity="0.8"/><rect x="55.2" y="60.4" width="3" height="4" fill="#1e1e1e" opacity="0.8"/><rect x="55.2" y="68.1" width="3" height="4" fill="#1e1e1e" opacity="0.8"/><rect x="63.8" y="13.9" width="3" height="4" fill="#1e1e1e" opacity="0.8"/><rect x="63.8" y="21.6" width="3" height="4" fill="#1e1e1e" opacity="0.8"/><rect x="63.8" y="29.4" width="3" height="4" fill="#1e1e1e" opacity="0.8"/><rect x="63.8" y="37.1" width="3" height="4" fill="#1e1e1e" opacity="0.8"/><rect x="63.8" y="44.9" width="3" height="4" fill="#1e1e1e" opacity="0.8"/><rect x="63.8" y="52.6" width="3" height="4" fill="#1e1e1e" opacity="0.8"/><rect x="63.8" y="60.4" width="3" height="4" fill="#1e1e1e" opacity="0.8"/><rect x="63.8" y="68.1" width="3" height="4" fill="#1e1e1e" opacity="0.8"/><rect x="72.2" y="13.9" width="3" height="4" fill="#1e1e1e" opacity="0.8"/><rect x="72.2" y="21.6" width="3" height="4" fill="#1e1e1e" opacity="0.8"/><rect x="72.2" y="29.4" width="3" height="4" fill="#1e1e1e" opacity="0.8"/><rect x="72.2" y="37.1" width="3" height="4" fill="#1e1e1e" opacity="0.8"/><rect x="72.2" y="44.9" width="3" height="4" fill="#1e1e1e" opacity="0.8"/><rect x="72.2" y="52.6" width="3" height="4" fill="#1e1e1e" opacity="0.8"/><rect x="72.2" y="60.4" width="3" height="4" fill="#1e1e1e" opacity="0.8"/><rect x="72.2" y="68.1" width="3" height="4" fill="#1e1e1e" opacity="0.8"/>
<rect x="53.9" y="12.9" width="1.5" height="6" fill="#9a9a9a" opacity="0.6"/><rect x="53.9" y="20.6" width="1.5" height="6" fill="#9a9a9a" opacity="0.6"/><rect x="53.9" y="28.4" width="1.5" height="6" fill="#9a9a9a" opacity="0.6"/><rect x="53.9" y="36.1" width="1.5" height="6" fill="#9a9a9a" opacity="0.6"/><rect x="53.9" y="43.9" width="1.5" height="6" fill="#9a9a9a" opacity="0.6"/><rect x="53.9" y="51.6" width="1.5" height="6" fill="#9a9a9a" opacity="0.6"/><rect x="53.9" y="59.4" width="1.5" height="6" fill="#9a9a9a" opacity="0.6"/><rect x="53.9" y="67.1" width="1.5" height="6" fill="#9a9a9a" opacity="0.6"/><rect x="63.2" y="12.9" width="1.5" height="6" fill="#9a9a9a" opacity="0.6"/><rect x="63.2" y="20.6" width="1.5" height="6" fill="#9a9a9a" opacity="0.6"/><rect x="63.2" y="28.4" width="1.5" height="6" fill="#9a9a9a" opacity="0.6"/><rect x="63.2" y="36.1" width="1.5" height="6" fill="#9a9a9a" opacity="0.6"/><rect x="63.2" y="43.9" width="1.5" height="6" fill="#9a9a9a" opacity="0.6"/><rect x="63.2" y="51.6" width="1.5" height="6" fill="#9a9a9a" opacity="0.6"/><rect x="63.2" y="59.4" width="1.5" height="6" fill="#9a9a9a" opacity="0.6"/><rect x="63.2" y="67.1" width="1.5" height="6" fill="#9a9a9a" opacity="0.6"/><rect x="72.6" y="12.9" width="1.5" height="6" fill="#9a9a9a" opacity="0.6"/><rect x="72.6" y="20.6" width="1.5" height="6" fill="#9a9a9a" opacity="0.6"/><rect x="72.6" y="28.4" width="1.5" height="6" fill="#9a9a9a" opacity="0.6"/><rect x="72.6" y="36.1" width="1.5" height="6" fill="#9a9a9a" opacity="0.6"/><rect x="72.6" y="43.9" width="1.5" height="6" fill="#9a9a9a" opacity="0.6"/><rect x="72.6" y="51.6" width="1.5" height="6" fill="#9a9a9a" opacity="0.6"/><rect x="72.6" y="59.4" width="1.5" height="6" fill="#9a9a9a" opacity="0.6"/><rect x="72.6" y="67.1" width="1.5" height="6" fill="#9a9a9a" opacity="0.6"/>
<path d="M0 0 L60 0 L40 8 L0 14 Z" fill="#121212"/>
<rect x="0" y="0" width="6" height="100" fill="#1a1a1a"/>
<rect x="0" y="78" width="100" height="22" fill="#1e1e1e"/>
<rect x="84" y="76" width="16" height="18" fill="#b8b8b8" opacity=".55"/>
</g>
<g filter="url(#bl6b)">
<path d="M62 4 L74 6 L30 80 L12 82 Z" fill="#d8d8d8" opacity=".55"/>
</g>
<path d="M70 5 L72 6 L16 86 L13 85 Z" fill="#e8e8e8" opacity=".3" filter="url(#bl4)"/>
</svg></div>
<svg class="abs" style="left:743px;top:715px" width="100" height="100" viewBox="0 0 100 100"><rect x="0.6" y="0.6" width="98.8" height="98.8" rx="6" fill="#fff" stroke="#3a5cf6" stroke-width="1.2" stroke-dasharray="3 2"/></svg>
<svg class="abs" style="left:783.9px;top:755px" width="19.5" height="19.5" viewBox="0 0 24 24"><path fill="#0b0b0b" fill-rule="evenodd" d="M10.5 3.75a6 6 0 0 0-5.98 6.496A5.25 5.25 0 0 0 6.75 20.25H18a4.5 4.5 0 0 0 2.206-8.423 3.75 3.75 0 0 0-4.133-4.303A6.001 6.001 0 0 0 10.5 3.75Zm2.03 5.47a.75.75 0 0 0-1.06 0l-3 3a.75.75 0 1 0 1.06 1.060l1.72-1.72v4.94a.75.75 0 0 0 1.5 0v-4.94l1.72 1.72a.75.75 0 1 0 1.06-1.06l-3-3Z"/></svg>

<div class="abs" style="left:478px;top:850px;width:752px;height:166px;overflow:hidden">
  <div class="box" style="left:24px;top:14px;width:698px;height:200px;border-radius:6px"></div>
  <svg class="abs" style="left:37px;top:27px" width="672" height="200" viewBox="0 0 672 200"><rect x="0.5" y="0.5" width="671" height="199" rx="7" fill="#eef2fa" stroke="#c3cae2" stroke-width="1" stroke-dasharray="3 2"/></svg>
  <div class="abs" style="left:223px;top:30px;width:300px;height:170px"><svg width="300" height="170" viewBox="0 0 300 170" style="display:block">
<defs><filter id="bl7" x="-5%" y="-5%" width="110%" height="110%"><feGaussianBlur stdDeviation="2"/></filter>
<filter id="bl7b" x="-5%" y="-5%" width="110%" height="110%"><feGaussianBlur stdDeviation="0.5"/></filter>
<linearGradient id="vt" x1="0" y1="0" x2="0" y2="1"><stop offset="0" stop-color="#000" stop-opacity=".6"/><stop offset="1" stop-color="#000" stop-opacity="0"/></linearGradient>
<linearGradient id="vr" x1="0" y1="0" x2="1" y2="0"><stop offset="0" stop-color="#eeebe4" stop-opacity="0"/><stop offset="1" stop-color="#f2f0ea" stop-opacity=".85"/></linearGradient>
<linearGradient id="hg" x1="0" y1="0" x2="0" y2="1"><stop offset="0" stop-color="#f7dc7a"/><stop offset="1" stop-color="#a8741a"/></linearGradient>
<linearGradient id="txg" x1="0" y1="0" x2="0" y2="1"><stop offset="0" stop-color="#f4f4f4"/><stop offset="1" stop-color="#bdbdbd"/></linearGradient></defs>
<g filter="url(#bl7)">
<rect width="300" height="170" fill="#9a907e"/>
<rect x="0" y="0" width="100" height="170" fill="#6e6454"/>
<rect x="0" y="25" width="17" height="60" fill="#2f2a22"/>
<rect x="20" y="40" width="40" height="50" fill="#85796a"/>
<rect x="60" y="20" width="12" height="150" fill="#3e382e"/>
<rect x="75" y="25" width="15" height="70" fill="#4a4337"/>
<rect x="0" y="92" width="100" height="8" fill="#b8ad9a"/>
<rect x="10" y="100" width="55" height="30" fill="#5e5446"/>
<rect x="100" y="60" width="150" height="110" fill="#b0a592"/>
<rect x="106.5" y="85.2" width="7" height="12" fill="#4c4438" opacity="0.8"/><rect x="106.5" y="107.8" width="7" height="12" fill="#4c4438" opacity="0.8"/><rect x="106.5" y="130.2" width="7" height="12" fill="#4c4438" opacity="0.8"/><rect x="106.5" y="152.8" width="7" height="12" fill="#4c4438" opacity="0.8"/><rect x="126.5" y="85.2" width="7" height="12" fill="#4c4438" opacity="0.8"/><rect x="126.5" y="107.8" width="7" height="12" fill="#4c4438" opacity="0.8"/><rect x="126.5" y="130.2" width="7" height="12" fill="#4c4438" opacity="0.8"/><rect x="126.5" y="152.8" width="7" height="12" fill="#4c4438" opacity="0.8"/><rect x="146.5" y="85.2" width="7" height="12" fill="#4c4438" opacity="0.8"/><rect x="146.5" y="107.8" width="7" height="12" fill="#4c4438" opacity="0.8"/><rect x="146.5" y="130.2" width="7" height="12" fill="#4c4438" opacity="0.8"/><rect x="146.5" y="152.8" width="7" height="12" fill="#4c4438" opacity="0.8"/><rect x="166.5" y="85.2" width="7" height="12" fill="#4c4438" opacity="0.8"/><rect x="166.5" y="107.8" width="7" height="12" fill="#4c4438" opacity="0.8"/><rect x="166.5" y="130.2" width="7" height="12" fill="#4c4438" opacity="0.8"/><rect x="166.5" y="152.8" width="7" height="12" fill="#4c4438" opacity="0.8"/><rect x="186.5" y="85.2" width="7" height="12" fill="#4c4438" opacity="0.8"/><rect x="186.5" y="107.8" width="7" height="12" fill="#4c4438" opacity="0.8"/><rect x="186.5" y="130.2" width="7" height="12" fill="#4c4438" opacity="0.8"/><rect x="186.5" y="152.8" width="7" height="12" fill="#4c4438" opacity="0.8"/><rect x="206.5" y="85.2" width="7" height="12" fill="#4c4438" opacity="0.8"/><rect x="206.5" y="107.8" width="7" height="12" fill="#4c4438" opacity="0.8"/><rect x="206.5" y="130.2" width="7" height="12" fill="#4c4438" opacity="0.8"/><rect x="206.5" y="152.8" width="7" height="12" fill="#4c4438" opacity="0.8"/><rect x="226.5" y="85.2" width="7" height="12" fill="#4c4438" opacity="0.8"/><rect x="226.5" y="107.8" width="7" height="12" fill="#4c4438" opacity="0.8"/><rect x="226.5" y="130.2" width="7" height="12" fill="#4c4438" opacity="0.8"/><rect x="226.5" y="152.8" width="7" height="12" fill="#4c4438" opacity="0.8"/>
<rect x="98" y="0" width="10" height="80" fill="#4a4438"/>
<rect x="125" y="10" width="9" height="70" fill="#443e33"/>
<rect x="160" y="10" width="9" height="60" fill="#554e42"/>
<rect x="100" y="36" width="200" height="42" fill="#5e574c"/>
<rect x="240" y="78" width="60" height="92" fill="#cdc8be"/>
<rect x="0" y="0" width="300" height="40" fill="url(#vt)"/>
<rect x="200" y="0" width="100" height="170" fill="url(#vr)" opacity=".7"/>
</g>
<g filter="url(#bl7b)" font-family="Liberation Sans" font-weight="bold">
<text x="88" y="33" font-size="38" fill="#5a5a5a" opacity=".18" textLength="208" lengthAdjust="spacingAndGlyphs">TRIANGLE</text>
<text x="90" y="73" font-size="40" fill="url(#txg)" stroke="#dcdcdc" stroke-width="2.5" textLength="206" lengthAdjust="spacingAndGlyphs">SHIRTWAIST</text>
<text x="224" y="117" font-size="46" fill="#f4f4f4" stroke="#eeeeee" stroke-width="3.5" textLength="70" lengthAdjust="spacingAndGlyphs">FIRE</text>
</g>
<text x="16" y="137" font-family="Liberation Serif" font-weight="bold" font-size="42" fill="url(#hg)" filter="url(#bl7b)">H</text>
<circle cx="34" cy="34" r="18" fill="#0c0c0c"/>
<text x="34" y="40" font-family="Liberation Serif" font-weight="bold" font-size="20" fill="url(#hg)" text-anchor="middle">H</text>
<rect x="23" y="42.5" width="22" height="0.8" fill="#c02020"/>
<text x="34" y="48.3" font-family="Liberation Sans" font-weight="bold" font-size="4.6" fill="#fff" text-anchor="middle">HISTORY</text>
<text x="64.5" y="29.3" font-family="Liberation Sans" font-weight="bold" font-size="17.6" fill="#fff" style="text-shadow:0 0 2px rgba(0,0,0,.5)" textLength="222" lengthAdjust="spacingAndGlyphs">The Triangle Shirtwaist Fac<tspan opacity=".45">t</tspan></text>
<text x="64.6" y="46" font-family="Liberation Sans" font-size="12.2" fill="#fff" textLength="47" lengthAdjust="spacingAndGlyphs">HISTORY</text>
<rect x="116" y="54" width="67" height="46.5" rx="13" fill="#ff0000"/>
<path d="M142.3 67 L160.5 77.3 L142.3 87.5 Z" fill="#fff"/>
</svg></div>
</div>

<div class="box" style="left:1255px;top:140px;width:207px;height:32px;background:#fff"></div><div class="abs" style="left:1436.5px;top:152px"><svg width="15" height="9" viewBox="0 0 15 9"><path d="M1 1.2l6.5 6.3 6.5-6.3" stroke="#4b5675" stroke-width="1.5" fill="none"/></svg></div><div class="box" style="left:1255px;top:208px;width:207px;height:32px;background:#fff"></div><div class="abs" style="left:1436.5px;top:220px"><svg width="15" height="9" viewBox="0 0 15 9"><path d="M1 1.2l6.5 6.3 6.5-6.3" stroke="#4b5675" stroke-width="1.5" fill="none"/></svg></div><div class="box" style="left:1255px;top:276px;width:207px;height:32px;background:#fff"></div><div class="abs" style="left:1436.5px;top:288px"><svg width="15" height="9" viewBox="0 0 15 9"><path d="M1 1.2l6.5 6.3 6.5-6.3" stroke="#4b5675" stroke-width="1.5" fill="none"/></svg></div><div class="box" style="left:1255px;top:344px;width:207px;height:32px;background:#fff"></div><div class="abs" style="left:1436.5px;top:356px"><svg width="15" height="9" viewBox="0 0 15 9"><path d="M1 1.2l6.5 6.3 6.5-6.3" stroke="#4b5675" stroke-width="1.5" fill="none"/></svg></div><div class="box" style="left:1255px;top:412px;width:207px;height:32px;background:#f7f7f9"></div><div class="abs" style="left:1436.5px;top:424px"><svg width="15" height="9" viewBox="0 0 15 9"><path d="M1 1.2l6.5 6.3 6.5-6.3" stroke="#4b5675" stroke-width="1.5" fill="none"/></svg></div>

<div class="tx" style="left:282.90px;top:60.20px;font-size:14.6px;color:#2f3751;font-weight:400;letter-spacing:-0.041px;">Add New Collection</div><div class="tx" style="left:263.20px;top:93.80px;font-size:14.4px;color:#2f5af0;font-weight:400;letter-spacing:0.114px;text-decoration:underline;text-underline-offset:2px">or, choose from presets</div><div class="tx" style="left:269.30px;top:140.90px;font-size:14.2px;color:#2f3751;font-weight:400;letter-spacing:-0.020px;">Events</div><div class="tx" style="left:270.30px;top:180.80px;font-size:14.2px;color:#2f3751;font-weight:400;letter-spacing:0.180px;">Collections</div><div class="tx" style="left:270.10px;top:220.90px;font-size:14.2px;color:#2f3751;font-weight:400;letter-spacing:-0.129px;">Our Team</div><div class="tx" style="left:269.10px;top:260.60px;font-size:14.2px;color:#2f5af0;font-weight:400;letter-spacing:0.250px;">History &amp; Stories</div><div class="tx" style="left:537.40px;top:58.10px;font-size:18.8px;color:#263049;font-weight:400;letter-spacing:0.007px;-webkit-text-stroke:0.35px #263049">Collection Item</div><div class="tx" style="left:1295.80px;top:60.10px;font-size:14.6px;color:#2f3751;font-weight:400;letter-spacing:-0.320px;">Cancel</div><div class="tx" style="left:1385.20px;top:60.30px;font-size:14.2px;color:#ffffff;font-weight:700;letter-spacing:-0.700px;">Save</div><div class="tx" style="left:502.40px;top:107.00px;font-size:12.8px;color:#2f3649;font-weight:400;letter-spacing:0.075px;">Title</div><div class="tx" style="left:530.00px;top:107.00px;font-size:12.8px;color:#868b98;font-weight:400;letter-spacing:0.078px;">(required)</div><div class="tx" style="left:515.00px;top:135.00px;font-size:14.6px;color:#2f3751;font-weight:400;letter-spacing:-0.119px;">A Fire That Changed Building Safety Forever</div><div class="tx" style="left:501.90px;top:175.30px;font-size:12.8px;color:#2f3649;font-weight:400;letter-spacing:-0.425px;">Alias</div><div class="tx" style="left:514.70px;top:203.10px;font-size:14.6px;color:#2f3751;font-weight:400;letter-spacing:0.277px;">a-fire-that-changed-building-safety-forever-2</div><div class="tx" style="left:500.90px;top:242.80px;font-size:12.8px;color:#2f3649;font-weight:400;letter-spacing:-0.033px;">Main Photo</div><div class="tx" style="left:513.90px;top:436.50px;font-size:14.6px;color:#2f3751;font-weight:400;letter-spacing:0.256px;">images/2026/03/20/fire-2.jpg</div><div class="tx" style="left:1149.30px;top:436.10px;font-size:14.6px;color:#2f3751;font-weight:400;letter-spacing:-0.525px;">Clear</div><div class="tx" style="left:502.20px;top:476.70px;font-size:12.8px;color:#2f3649;font-weight:400;letter-spacing:-0.057px;">Alt Text</div><div class="tx" style="left:513.90px;top:504.90px;font-size:14.6px;color:#2f3751;font-weight:400;letter-spacing:0.008px;">Fire truck pulled by horses</div><div class="tx" style="left:514.90px;top:558.10px;font-size:12.8px;color:#2f3649;font-weight:400;letter-spacing:-0.333px;">Gallery</div><div class="tx" style="left:502.00px;top:845.80px;font-size:12.8px;color:#2f3649;font-weight:400;letter-spacing:-0.200px;">Video</div><div class="tx" style="left:1254.00px;top:122.00px;font-size:12.8px;color:#2f3649;font-weight:400;letter-spacing:0.060px;">Status</div><div class="tx" style="left:1267.20px;top:150.20px;font-size:14.6px;color:#2f3751;font-weight:400;letter-spacing:-0.100px;">Published</div><div class="tx" style="left:1255.00px;top:190.00px;font-size:12.8px;color:#2f3649;font-weight:400;letter-spacing:-0.260px;">Access</div><div class="tx" style="left:1267.20px;top:217.80px;font-size:14.6px;color:#2f3751;font-weight:400;letter-spacing:0.180px;">Public</div><div class="tx" style="left:1254.10px;top:258.10px;font-size:12.8px;color:#2f3649;font-weight:400;letter-spacing:-0.229px;">Language</div><div class="tx" style="left:1267.80px;top:286.00px;font-size:14.6px;color:#2f3751;font-weight:400;letter-spacing:-0.100px;">All</div><div class="tx" style="left:1255.10px;top:325.70px;font-size:12.8px;color:#2f3649;font-weight:400;letter-spacing:-0.211px;">Created by</div><div class="tx" style="left:1268.80px;top:353.30px;font-size:14.6px;color:#2f3751;font-weight:400;letter-spacing:-0.467px;">john</div><div class="tx" style="left:1255.10px;top:393.80px;font-size:12.8px;color:#2f3649;font-weight:400;letter-spacing:-0.164px;">Associations</div><div class="tx" style="left:1267.80px;top:421.70px;font-size:14.6px;color:#8a8e98;font-weight:400;letter-spacing:-0.200px;">Choose a language</div><div class="tx" style="left:317.80px;top:139.60px;font-size:10.2px;color:#8a8f9b;font-weight:400;letter-spacing:-0.300px;">(1)</div><div class="tx" style="left:346.40px;top:179.40px;font-size:10.2px;color:#8a8f9b;font-weight:400;letter-spacing:-0.400px;">(1)</div><div class="tx" style="left:336.90px;top:219.20px;font-size:10.2px;color:#8a8f9b;font-weight:400;letter-spacing:-0.450px;">(1)</div><div class="tx" style="left:383.30px;top:258.60px;font-size:10.2px;color:#8a8f9b;font-weight:400;letter-spacing:0.400px;">(2)</div>
</body></html>
